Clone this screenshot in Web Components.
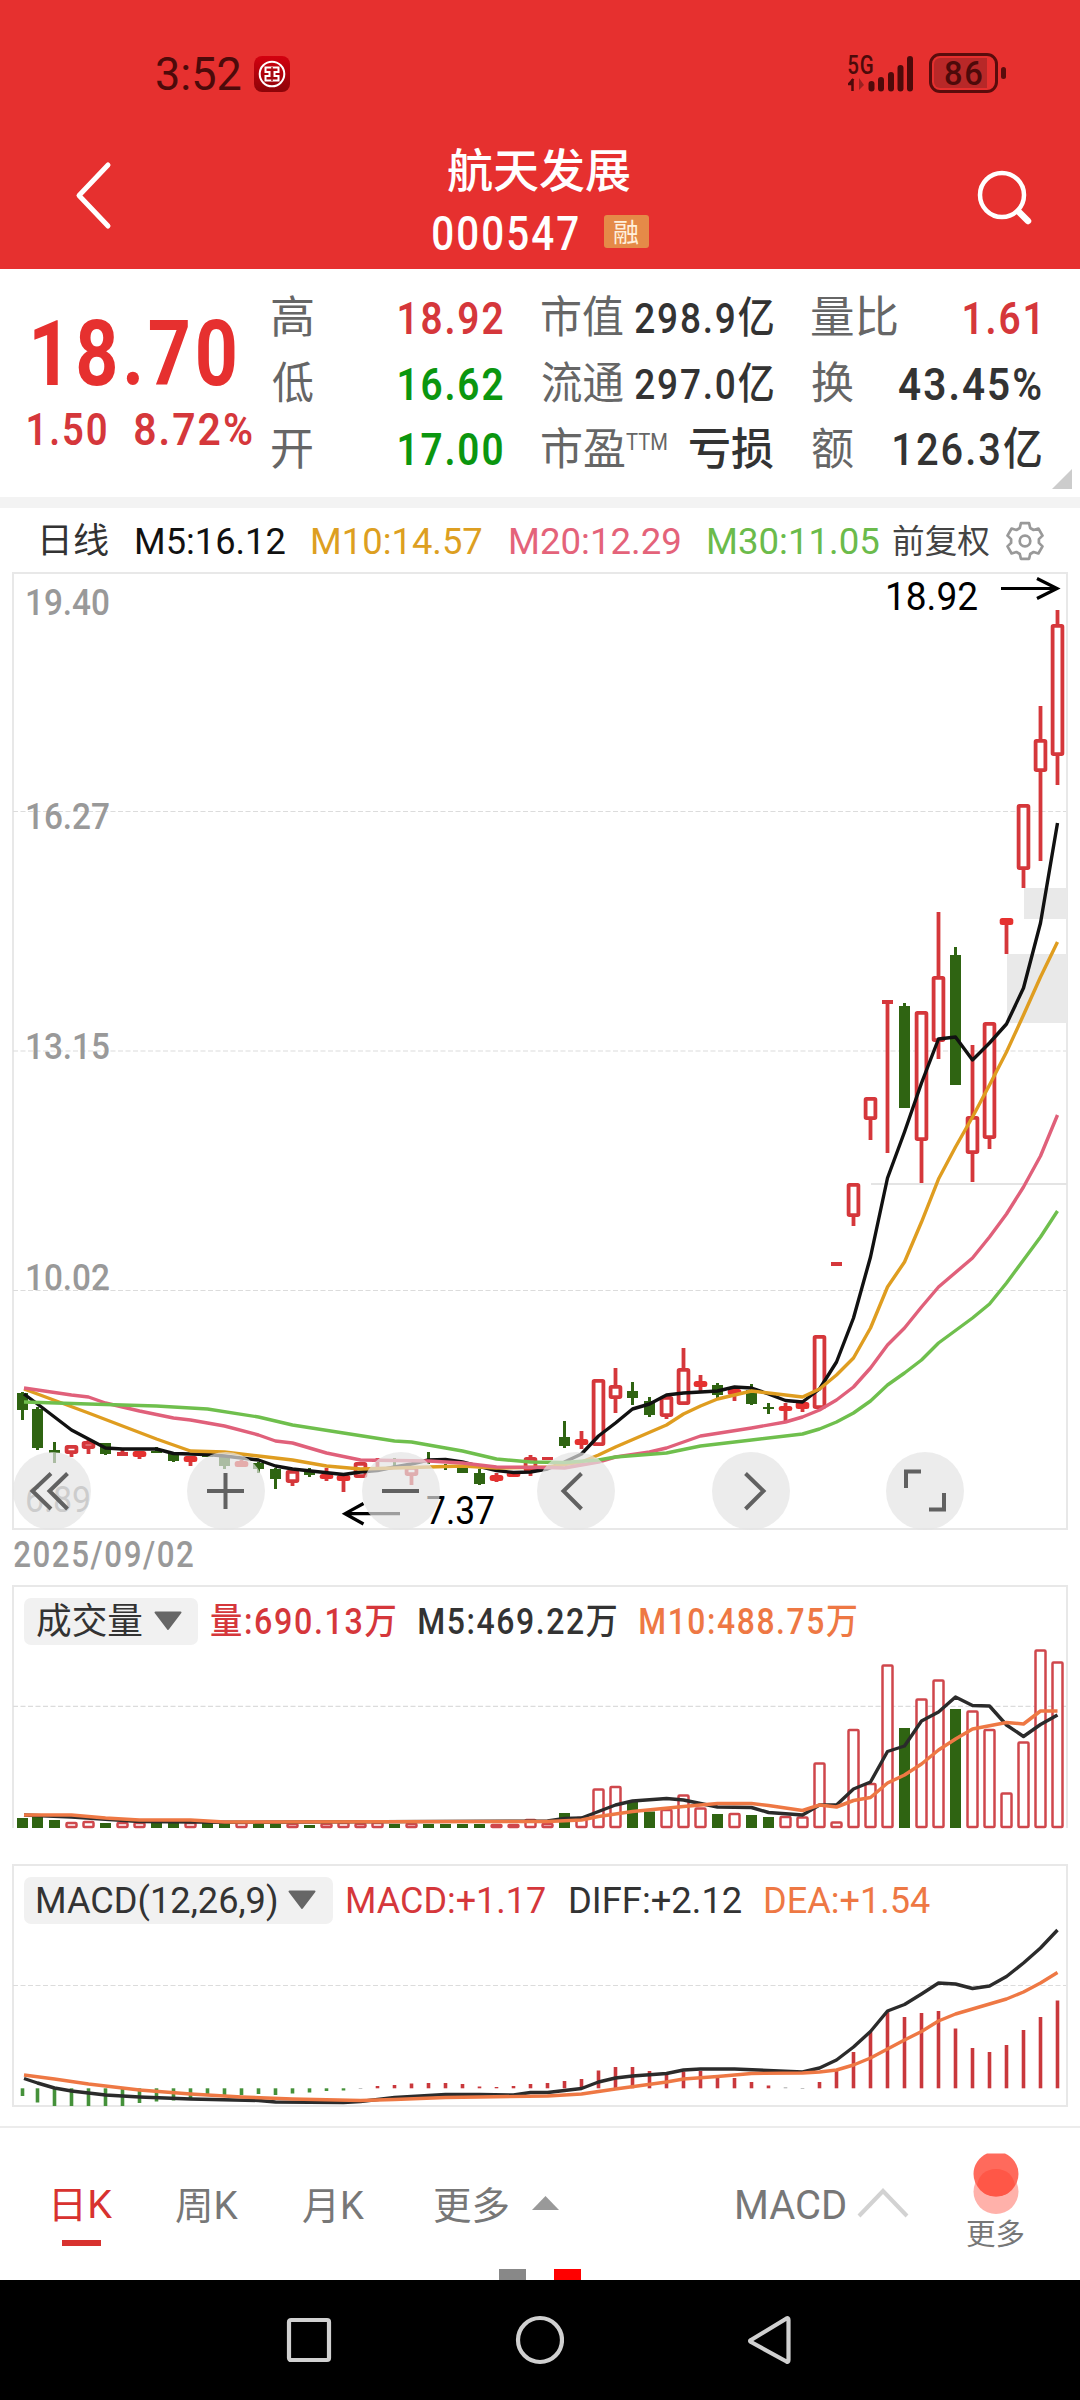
<!DOCTYPE html>
<html lang="zh-CN">
<head>
<meta charset="utf-8">
<title>航天发展 000547</title>
<style>
html,body{margin:0;padding:0;background:#fff}
body{width:1080px;height:2400px;overflow:hidden;font-family:Roboto,"Noto Sans CJK SC",sans-serif}
</style>
</head>
<body>
<stock-screen></stock-screen>
<script>
const FONT='Roboto,"Noto Sans CJK SC",sans-serif';
const RED='#e6302f', UP='#d5373b', DOWN='#2f6412';
const def=(name,html,after)=>customElements.define(name,class extends HTMLElement{
  connectedCallback(){
    if(this.shadowRoot)return;
    const t=document.createElement('template');
    t.innerHTML=typeof html==='function'?html(this):html;
    this.attachShadow({mode:'open'}).appendChild(t.content.cloneNode(true));
    if(after)after(this,this.shadowRoot);
  }
});

/* One line of text whose ink spans exactly `w` pixels */
const pen=document.createElement('canvas').getContext('2d');
def('fit-text',el=>{
  const s=+el.getAttribute('s'),w=+el.getAttribute('w'),b=el.getAttribute('b')||400,txt=el.getAttribute('t');
  const color=el.getAttribute('c')||'inherit',dy=el.getAttribute('dy')||0;
  const ls=(b>=500&&/\d/.test(txt)?s*.05:0).toFixed(2)+'px';
  pen.font=`${b} ${s}px ${FONT}`;
  pen.letterSpacing=ls;
  const m=pen.measureText(txt),k=w/(m.actualBoundingBoxLeft+m.actualBoundingBoxRight);
  return `<style>:host{display:block;flex:none;width:${w}px;height:${s}px;color:${color};font:${b} ${s}px/${s}px ${FONT};letter-spacing:${ls}}
  span{display:block;width:max-content;white-space:pre;transform-origin:0 0;transform:translate(${m.actualBoundingBoxLeft*k}px,${dy}px) scaleX(${k})}</style><span>${txt}</span>`;
});
const T=(t,w,s,c,b=400,ml=0,dy=0)=>`<fit-text t="${t}" w="${w}" s="${s}" c="${c}" b="${b}" dy="${dy}" style="margin-left:${ml}px"></fit-text>`;

def('status-bar',`<style>
:host{display:flex;height:110px;box-sizing:border-box;padding:53px 74px 0 157px;background:${RED};align-items:flex-start}
.clock{display:flex;align-items:center;height:41px;flex:1}
svg{display:block;flex:none}
.net{display:flex;flex-direction:column}
.batt{box-sizing:border-box;width:69px;height:40px;border:3px solid #5a0c0c;border-radius:11px;display:flex;align-items:center;justify-content:center;margin-left:14px;background:linear-gradient(90deg,#b82828 88%,transparent 88%);background-clip:content-box;padding:2px}
.nub{width:5px;height:12px;border-radius:3px;background:#5a0c0c;margin:14px 0 0 3px}
</style>
<div class="clock">${T('3:52',84,46,'#4d0a0a',400)}
<svg width="36" height="36" viewBox="0 0 36 36" style="margin-left:13px"><defs><linearGradient id="g" x2="0" y2="1"><stop stop-color="#d4000f"/><stop offset="1" stop-color="#8c0408"/></linearGradient></defs><rect width="36" height="36" rx="8" fill="url(#g)"/><circle cx="18" cy="18" r="12.3" fill="none" stroke="#fff" stroke-width="2"/><path d="M11.5 11.5h13v4.5h-4v4h4v4.500h-13v-4.500h4v-4h-4z" fill="none" stroke="#fff" stroke-width="2"/><path d="M18 11v14" stroke="#9f1014" stroke-width="1.500"/></svg></div>
<div class="net">${T('5G',25,25,'#4d0a0a',500,0,0)}
<svg width="18" height="13" viewBox="0 0 18 13"><path d="M4.500 13V1M5.500 1L1 6h4" stroke="#4d0a0a" stroke-width="2.500" fill="none"/><path d="M11 0v12l5-5z" fill="#9a2020"/></svg></div>
<svg width="48" height="38" viewBox="0 0 48 38" style="margin-left:-6px;margin-top:1px"><g stroke="#4d0a0a" stroke-width="6" stroke-linecap="round"><path d="M4.500 30v4.500M14 26v8.500M24 21v13.500M33.500 14v20.500M43 5v29.500"/></g></svg>
<div class="batt">${T('86',37,33,'#4d0a0a',500)}</div><div class="nub"></div>`);

def('title-bar',`<style>
:host{display:flex;height:159px;background:${RED}}
.l,.r{flex:1;display:flex}.l svg{margin:50px 0 0 72px}.r svg{margin:59px 0 0 323px}
.m{width:220px;display:flex;flex-direction:column;padding-top:39px;box-sizing:border-box}
.c{display:flex;align-items:center;height:33px;margin-top:20px}
.tag{width:45px;height:33px;border-radius:3px;background:#e58a48;display:flex;align-items:center;justify-content:center;margin-left:26px}
</style>
<div class="l"><svg width="42" height="70" viewBox="0 0 42 70"><path d="M36 5L7 35.500L36 66" fill="none" stroke="#fff" stroke-width="5" stroke-linecap="round" stroke-linejoin="round"/></svg></div>
<div class="m">${T('航天发展',182,46,'#fff',500,18,-1)}
<div class="c">${T('000547',145,48,'#fff',500,3,1.5)}<div class="tag">${T('融',25,26,'#fff0dc',400,0,1)}</div></div></div>
<div class="r"><svg width="60" height="62" viewBox="0 0 60 62"><circle cx="29" cy="26" r="22" fill="none" stroke="#fff" stroke-width="4.500"/><path d="M45.500 42.500L55 52" stroke="#fff" stroke-width="6.500" stroke-linecap="round"/></svg></div>`);

const cell=(a,b)=>`<div class="cell"><div class="lab">${a}</div>${b}</div>`;
def('quote-board',`<style>
:host{display:flex;height:228px;box-sizing:border-box;background:#fff;position:relative}
.p{width:272px;display:flex;flex-direction:column}
.p .d{display:flex;margin-top:7px}
.g{display:grid;grid-template-columns:230px 231px 229px;column-gap:39.500px;grid-template-rows:66px 66px 65px;margin-top:16px}
.cell{display:flex;align-items:center;justify-content:space-between}
.lab{display:flex;align-items:center}
svg{position:absolute;right:8px;bottom:8px}
</style>
<div class="p"><div style="height:39px"></div>${T('18.70',201,91.5,RED,700,34)}<div class="d">${T('1.50',78,45,UP,600,28)}${T('8.72%',117,45,UP,600,29)}</div></div>
<div class="g">
${cell(T('高',41,44,'#666'),T('18.92',103,45,UP,600))}
${cell(T('市值',81,44,'#666'),T('298.9亿',138,43,'#333',500))}
${cell(T('量比',85,44,'#666'),T('1.61',74,45,UP,600).replace('style="','style="margin-right:3px;'))}
${cell(T('低',41,44,'#666'),T('16.62',103,45,'#0b960f',600))}
${cell(T('流通',81,44,'#666'),T('297.0亿',138,43,'#333',500))}
${cell(T('换',41,44,'#666'),T('43.45%',142,45,'#333',600))}
${cell(T('开',40,44,'#666'),T('17.00',103,45,'#0b960f',600))}
${cell(T('市盈',83,44,'#666')+T('TTM',41,23,'#666',400,1,-7),T('亏损',83,44,'#333',500))}
${cell(T('额',41,44,'#666'),T('126.3亿',147,45,'#333',500))}
</div><svg width="20" height="20"><path d="M20 0V20H0z" fill="#ccc"/></svg>`);

def('ma-legend',()=>{
  let d='';
  for(let k=0;k<6;k++){const a=-90+60*k,p=(r,o)=>{const t=(a+o)*Math.PI/180;return (20+r*Math.cos(t)).toFixed(1)+' '+(20+r*Math.sin(t)).toFixed(1)};
    d+=(k?'L':'M')+p(14,-22)+'L'+p(18.3,-13)+'L'+p(18.3,13)+'L'+p(14,22);}
  return `<style>:host{display:flex;height:64px;border-top:11px solid #f3f3f3;padding:2px 0 0 43px;align-items:center;box-sizing:border-box;height:75px}svg{margin-left:15.500px;flex:none}</style>
${T('日线',65,35,'#333')}${T('M5:16.12',148,37,'#111',400,29)}${T('M10:14.57',169,37,'#dd9f21',400,28)}${T('M20:12.29',169,37,'#e4637a',400,29)}${T('M30:11.05',170,37,'#6bbb4b',400,29)}${T('前复权',96,33,'#444',400,14)}
<svg width="40" height="40" viewBox="0 0 40 40" fill="none" stroke="#999" stroke-width="2.700" stroke-linejoin="round"><path d="${d}z"/><circle cx="20" cy="20" r="5.300"/></svg>`;
});

const X=i=>i?20.5+17*i:22.5;
const LX=i=>i?20.5+17*i:24;
/* [index,y] pairs -> polyline */
const line=(a,c,w)=>{let p='';for(let i=0;i<a.length;i+=2)p+=LX(a[i])+','+a[i+1]+' ';return `<polyline points="${p}" fill="none" stroke="${c}" stroke-width="${w}" stroke-linejoin="round"/>`};
const dash=y=>`<path d="M13 ${y}H1066" stroke="#dcdcdc" stroke-width="1.200" stroke-dasharray="5 2.500"/>`;

/* high, body top, body bottom, low, g = falling / r = rising */
const K=`1392 1393 1410 1420 g,1407 1409 1448 1450 g,1442 1450 1453 1463 g,1445 1445 1454 1457 r,1440 1441 1449 1454 r,1443 1443 1454 1455 g,1449 1452 1456 1456 r,1451 1451 1457 1459 r,1447 1451 1453 1453 g,1454 1454 1461 1462 g,1456 1456 1462 1466 r,1454 1455 1457 1457 g,1457 1457 1466 1469 g,1460 1461 1467 1467 r,1462 1463 1469 1473 g,1468 1469 1479 1489 g,1470 1470 1483 1486 r,1468 1471 1475 1477 g,1468 1474 1479 1481 r,1475 1475 1481 1492 r,1462 1462 1478 1478 r,1458 1459 1462 1468 r,1458 1460 1462 1466 g,1466 1466 1476 1485 r,1452 1459 1461 1464 g,1464 1466 1468 1470 g,1466 1467 1473 1473 g,1469 1473 1484 1485 g,1473 1475 1481 1482 r,1471 1472 1477 1477 r,1455 1457 1472 1476 r,1457 1457 1460 1460 r,1421 1437 1446 1448 g,1431 1439 1445 1449 r,1379 1379 1446 1446 r,1368 1385 1399 1413 r,1382 1391 1398 1405 g,1397 1401 1415 1417 g,1396 1396 1417 1419 r,1348 1368 1405 1405 r,1375 1381 1387 1391 r,1383 1385 1395 1398 g,1387 1389 1395 1401 r,1384 1390 1404 1405 g,1403 1407 1409 1414 g,1403 1406 1411 1421 r,1400 1402 1409 1412 r,1335 1335 1409 1409 r,1262 1262 1266 1266 r,1183 1183 1217 1226 r,1097 1097 1120 1140 r,1000 1000 1004 1153 r,1003 1006 1108 1108 g,1011 1011 1141 1183 r,912 976 1042 1059 r,947 955 1085 1085 g,1045 1116 1154 1182 r,1022 1022 1139 1149 r,918 918 925 954 r,804 804 870 888 r,706 739 772 861 r,610 624 756 785 r`.split(',').map(s=>s.split(' '));

const candles=()=>K.map((k,i)=>{
  const [h,t,b,l]=k.map(Number),x=X(i),g=k[4]==='g',c=g?DOWN:UP;
  let s=`<path d="M${x} ${h}V${t+1}M${x} ${b-1}V${l}" stroke="${c}" stroke-width="${g?3:3.8}"/>`;
  if(g)s+=`<rect x="${x-5.5}" y="${t}" width="11" height="${Math.max(b-t,2)}" fill="${c}"/>`;
  else if(b-t<=4)s+=`<rect x="${x-5.5}" y="${t}" width="11" height="${b-t}" fill="${c}"/>`;
  else if(b-t<=7)s+=`<rect x="${x-6.8}" y="${t}" width="13.600" height="${b-t}" rx="2.500" fill="#e5312f"/>`;
  else s+=`<rect x="${x-4.9}" y="${t+1.9}" width="9.800" height="${b-t-3.8}" rx=".8" fill="#fff" stroke="${c}" stroke-width="3.800"/>`;
  return s;}).join('');

const lab=(t,x,y,w,s,c,b)=>`<text x="${x}" y="${y}" font-size="${s}" fill="${c}" font-weight="${b}" textLength="${w}" lengthAdjust="spacingAndGlyphs">${t}</text>`;

def('candle-chart',()=>`<style>:host{display:block;height:958px;position:relative}
svg.c{display:block;font-family:${FONT}}
.tools{position:absolute;left:12.500px;top:880px;display:flex;gap:96.800px}
.tools i{display:block;width:78px;height:78px;border-radius:50%;background:rgba(227,227,227,.69)}
.tools svg{display:block;fill:none;stroke:#616161;stroke-width:4}</style>
<svg class="c" width="1080" height="958" viewBox="0 572 1080 958">
<rect x="13" y="573" width="1054" height="956" fill="#fff" stroke="#e8e8e8" stroke-width="2"/>
${dash(811.5)}${dash(1051)}${dash(1290.5)}
<rect x="1024" y="888" width="43" height="31" fill="#e9e9e9"/><rect x="1007" y="954" width="60" height="69" fill="#e9e9e9"/><path d="M871 1184H1067" stroke="#e4e4e4" stroke-width="2"/>
${lab('19.40',25,615,85,36,'#999',500)}${lab('16.27',25,829,85,36,'#999',500)}${lab('13.15',25,1059,85,36,'#999',500)}${lab('10.02',25,1290,85,36,'#999',500)}${lab('6.89',25,1512,66,36,'#999',400)}
${candles()}
${line([0,1394,1,1404,3,1430,5,1448,6,1449,8,1449,9,1453.5,11,1454.5,12,1456,14,1460,15,1466,16,1469,19,1474.5,20,1472,21,1470.5,22,1467,23,1464,24,1460,25,1459.5,26,1462,27,1466.5,28,1470.5,29,1472.5,30,1472,31,1469,32,1462,33,1454,34,1436,35,1423,36,1409,37,1404,38,1395,39,1393,41,1391,42,1387,43,1388,44,1394,45,1400.5,46,1402,47,1389,48,1362,49,1318,50,1257,51,1178,52,1132,53,1083,54,1039,55,1037,56,1060,57,1043,58,1024,59,988,60,923,61,823],'#111',3.4)}
${line([0,1389,1,1394,4,1413,8,1439,10,1451,12,1452,14,1456,15,1458,16,1460,18,1466,20,1469,22,1468,24,1467,26,1466,28,1468,31,1467,33,1462,34,1455,35,1447,38,1425,39,1414,40,1406,41,1399,42,1395,43,1391,44,1393,46,1397,47,1389,48,1375,49,1358,50,1328,51,1287,52,1262,53,1222,54,1179,55,1147,56,1117,57,1085,58,1052,59,1015,60,977,61,942],'#df9d20',3.4)}
${line([0,1388,3,1395,4,1397,5,1403,7,1411,9,1418,10,1420,12,1426,14,1435,15,1441,16,1443,18,1453,20,1460,22,1460.5,24,1461,26,1463,28,1467,31,1467.5,32,1468,33,1465,34,1462,35,1457,37,1452,38,1448,40,1436,43,1428,45,1422,46,1417,47,1410,48,1400,49,1387,50,1368,51,1345,52,1328,53,1307,54,1287,56,1258,57,1237,58,1214,59,1187,60,1156,61,1115],'#e0607a',3.4)}
${line([0,1402,4,1404,8,1406,11,1409,14,1417,16,1425,19,1433,22,1441,23,1442,25,1448,26,1451,28,1459,30,1462,32,1462.5,34,1460,35,1457,38,1453,40,1446,43,1440,46,1434,47,1429,48,1422,49,1413,50,1401,51,1385,52,1373,53,1360,54,1343,56,1318,57,1304,58,1283,59,1260,60,1237,61,1211],'#6fbf4d',3.4)}
<g fill="none" stroke="#000" stroke-width="3.200"><path d="M1001 588.500H1056M1037 578.500L1057 588.500L1037 598.500"/><path d="M400 1513.700H346M363.500 1503.500L345 1513.700L363.500 1524"/></g>
${lab('18.92',885,610,93,38,'#000',400)}${lab('7.37',426,1524,69,38,'#000',400)}
</svg>
<div class="tools">
<i><svg width="78" height="78"><path d="M38 21.500L19.500 39L38 57M54.500 21.500L36.500 39L54.500 57"/></svg></i>
<i><svg width="78" height="78"><path d="M20 39H57M38.500 21V57"/></svg></i>
<i><svg width="78" height="78"><path d="M20 39H57"/></svg></i>
<i><svg width="78" height="78"><path d="M44.500 21.500L26.500 39L44.500 57"/></svg></i>
<i><svg width="78" height="78"><path d="M33.500 21.500L51.500 39L33.500 57"/></svg></i>
<i><svg width="78" height="78"><path d="M20 36V19.500H35M58 41V57.500H43"/></svg></i>
</div>`);

def('date-row',`<style>:host{display:flex;height:55px;padding:6px 14px 0;box-sizing:border-box}</style>${T('2025/09/02',179,37,'#999',500)}`);

def('indicator-head',el=>`<style>:host{display:flex;align-items:center;position:absolute;left:24px;top:12px;height:48px}
.chip{display:flex;align-items:center;height:47px;border-radius:7px;background:#f1f1f1;padding-left:13px;width:${el.getAttribute('cw')-13}px}
svg{margin-left:12px}</style><div class="chip"><slot name="chip"></slot><svg width="28" height="20"><path d="M1.500 1.500H26.500L14 18z" fill="#666" stroke="#666" stroke-width="2" stroke-linejoin="round"/></svg></div><slot></slot>`);

const V=[1818,1817,1820,1822,1821,1823,1822,1822,1822,1822,1822,1823,1823,1822,1824,1824,1823,1825,1823,1822,1823,1822,1824,1823,1824,1824,1824,1824,1824,1824,1819,1823,1813,1817,1788.5,1786,1802,1811.5,1809,1794.5,1807.5,1814,1813,1815,1817,1816,1816.5,1762.5,1821.5,1729,1783,1664.5,1728,1698.5,1679.5,1709,1710.5,1729,1792.5,1741.5,1649.5,1661.5];
def('volume-panel',()=>`<style>:host{display:block;height:244px;position:relative}svg{display:block}</style>
<svg width="1080" height="244" viewBox="0 1585 1080 244">
<path d="M13 1828V1586H1067V1828" fill="none" stroke="#e8e8e8" stroke-width="2"/>${dash(1706.3)}
${V.map((t,i)=>K[i][4]==='g'?`<rect x="${X(i)-5.5}" y="${t}" width="11" height="${1828-t}" fill="${DOWN}"/>`:`<rect x="${X(i)-5}" y="${t+1}" width="10" height="${1827-t-1}" rx="1" fill="#fff" stroke="#cf474c" stroke-width="2.500"/>`).join('')}
${line([0,1815,3,1817,7,1821.5,12,1822.3,31,1821,32,1818.5,33,1818,34,1811.5,35,1805,36,1801,38,1798.5,39,1800,40,1803.5,41,1807,43,1807.5,44,1812.5,46,1815,47,1805,48,1805,49,1789,50,1782,51,1751.5,52,1746,53,1721,54,1712,55,1697,56,1705.5,57,1706,58,1725,59,1736.5,60,1724.5,61,1715],'#2b2b2b',3.4)}
${line([0,1815,3,1815,5,1818,7,1820,10,1820,12,1822,31,1821.5,33,1820,34,1816.5,36,1811.5,39,1806.5,41,1803.5,43,1803.5,44,1805.5,46,1810.5,47,1805,48,1807,49,1800.5,50,1797.5,51,1783,52,1775,53,1764,54,1750,55,1739,56,1729,58,1722.5,59,1724,60,1711,61,1711],'#ee7844',3.500)}
</svg>
<indicator-head cw="174"><span slot="chip">${T('成交量',105,36,'#333',400,0,1)}</span>${T('量:690.13万',184,36,UP,500,13,.8)}${T('M5:469.22万',197,36,'#333',500,24,.8)}${T('M10:488.75万',216,36,'#ee7844',500,24,.8)}</indicator-head>`);

const M=[2096,2102.5,2106,2106,2106,2106,2106,2103,2101.5,2100.5,2099,2096,2095,2095,2094,2095,2093.5,2092.5,2091,2090.5,2089,2086,2085,2083.5,2083,2083,2084,2086.5,2087,2086,2084,2083,2081,2079,2070.5,2067,2067,2071,2072.5,2071.5,2071,2077,2078,2082,2085.5,2087.3,2089,2082,2071,2052,2032,2012,2017,2013,2011,2028.5,2048,2052,2045,2030,2017,2000.5];
def('macd-panel',()=>`<style>:host{display:block;height:243px;margin-top:35px;position:relative}svg{display:block}</style>
<svg width="1080" height="243" viewBox="0 1864 1080 243">
<rect x="13" y="1865" width="1054" height="241" fill="none" stroke="#e8e8e8" stroke-width="2"/>${dash(1985.5)}
${M.map((y,i)=>`<path d="M${X(i)} 2088.300V${y}" stroke="${i===20||i>44&&i<47?'#aaa':y>2088.3?'#45913a':'#c9383c'}" stroke-width="3.600"/>`).join('')}
${line([0,2078.5,1,2083,2,2088,3,2091,5,2095,7,2097,10,2099,14,2100.5,15,2102,19,2102.5,20,2101.5,22,2097.5,25,2094.5,27,2094.5,29,2095,30,2092.5,31,2092.5,33,2088.5,34,2082,35,2078,36,2076,38,2073.5,39,2070,40,2069,42,2069,46,2072,47,2068,48,2060,49,2047,50,2031.5,51,2011,52,2004.5,53,1994,54,1983,55,1984,56,1988.5,57,1986,58,1976.5,59,1963,60,1948,61,1930],'#2b2b2b',3.4)}
${line([0,2075,2,2079,4,2084,7,2090,10,2094,13,2097,16,2099,20,2100.5,22,2099.5,25,2097.5,27,2097,31,2096,33,2094,35,2089,38,2082,39,2079,41,2076.5,43,2073.5,46,2073,47,2072,48,2070,49,2065,50,2058,51,2049,52,2040,53,2031.5,54,2021,55,2014,56,2009,58,1999,59,1992,60,1983,61,1972.5],'#ee7844',3.4)}
</svg>
<indicator-head cw="309"><span slot="chip">${T('MACD(12,26,9)',239,36,'#333',450,0,1)}</span>${T('MACD:+1.17',198,36,UP,450,14,.5)}${T('DIFF:+2.12',171,36,'#333',450,25,.5)}${T('DEA:+1.54',165,36,'#ee7844',450,24,.5)}</indicator-head>`);

def('period-tabs',`<style>:host{display:flex;flex-direction:column;height:154px;box-sizing:border-box;margin-top:19px;border-top:2px solid #ececec}
.row{display:flex;align-items:center;height:142px;padding-left:54px;box-sizing:border-box}
.on{display:flex;flex-direction:column;align-items:center;padding-top:33px}.on b{width:39px;height:6px;background:#d8322f;margin:18px 3px 0 0}
.row>svg{flex:none}.row>fit-text{position:relative;top:7px}.row>svg{position:relative;top:4px}
.more{display:flex;flex-direction:column;align-items:center;margin-left:58px;padding-top:3px}.more svg{display:block;margin-bottom:4px}
.dots{display:flex;gap:28px;padding-left:499px;height:11px;flex:none}.dots i{width:27px;height:11px;background:#888}.dots i+i{background:#f00}</style>
<div class="row"><div class="on">${T('日K',58,38,'#d8322f',400,0,2)}<b></b></div>${T('周K',62,38,'#777',400,64)}${T('月K',61,38,'#777',400,65)}${T('更多',74,38,'#777',400,70)}
<svg width="27" height="14" style="margin-left:24px"><path d="M13.500 0L27 14H0z" fill="#999"/></svg>${T('MACD',108,40,'#777',400,178)}
<svg width="52" height="32" style="margin-left:12px"><path d="M2 29L26 4L50 29" fill="none" stroke="#d2d2d2" stroke-width="4"/></svg>
<div class="more"><svg width="46" height="62" viewBox="0 0 46 62"><circle cx="23" cy="38.500" r="22.500" fill="#ffb1aa"/><path d="M14 .5H32A22.500 22.500 0 0 1 45.500 21A22.500 22.500 0 0 1 .5 21A22.500 22.500 0 0 1 14 .5" fill="#ff6a5c"/><path d="M4 32Q7 16.500 23 16Q39 16.500 42 32Q36 43.500 23 43.500Q10 43.500 4 32" fill="#ff5747"/></svg>${T('更多',57,29,'#777',400,0,2)}</div></div>
<div class="dots"><i></i><i></i></div>`);

def('system-nav',`<style>:host{display:flex;height:120px;background:#000;align-items:center;padding-left:285px;gap:181px}svg{fill:none;stroke:#d0d0d0;stroke-width:4.200;flex:none}</style>
<svg width="48" height="50"><rect x="4" y="5" width="40" height="40" rx="2"/></svg>
<svg width="50" height="50"><circle cx="26" cy="25" r="22"/></svg>
<svg width="50" height="52"><path d="M4.500 26L40 4.500Q42 3.500 42 6V46Q42 48.500 40 47.500L4.500 28Q2.500 27 4.500 26Z" transform="translate(1.5)" stroke-linejoin="round"/></svg>`);

def('stock-screen',`<style>:host{display:flex;flex-direction:column;width:1080px;height:2400px;overflow:hidden;background:#fff}:host>*{flex:none}</style>
<status-bar></status-bar><title-bar></title-bar><quote-board></quote-board><ma-legend></ma-legend><candle-chart></candle-chart><date-row></date-row><volume-panel></volume-panel><macd-panel></macd-panel><period-tabs></period-tabs><system-nav></system-nav>`);
</script>
</body>
</html>
